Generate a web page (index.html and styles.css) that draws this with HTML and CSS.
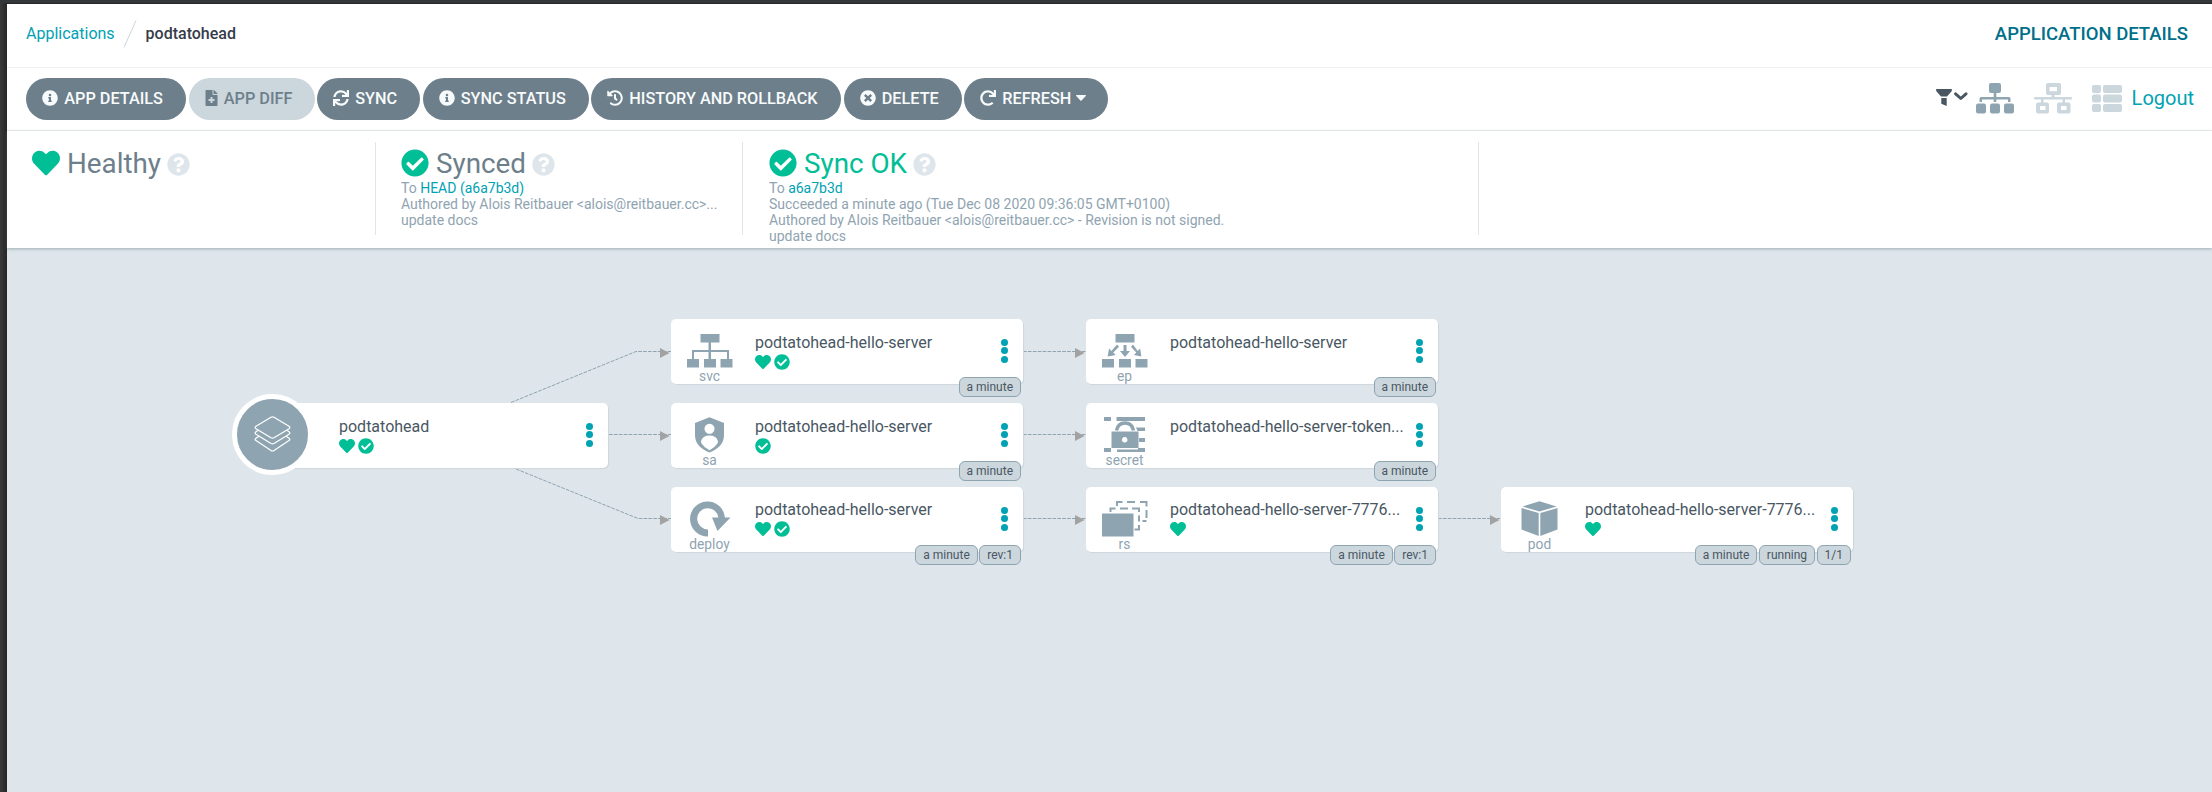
FILE: index.html
```html
<!DOCTYPE html>
<html lang="en">
<head>
<meta charset="utf-8">
<title>podtatohead</title>
<link rel="stylesheet" href="styles.css">
</head>
<body>
<svg class="defs" width="0" height="0">
  <symbol id="heart" viewBox="0 0 512 512"><path d="M462.3 62.6C407.5 15.9 326 24.3 275.7 76.2L256 96.5l-19.7-20.3C186.1 24.3 104.5 15.9 49.7 62.6c-62.8 53.6-66.1 149.8-9.9 207.9l193.5 199.8c12.5 12.9 32.8 12.9 45.3 0l193.5-199.8c56.3-58.1 53-154.3-9.8-207.9z"/></symbol>
  <symbol id="check" viewBox="0 0 512 512"><path d="M504 256c0 136.967-111.033 248-248 248S8 392.967 8 256 119.033 8 256 8s248 111.033 248 248zM227.314 387.314l184-184c6.248-6.248 6.248-16.379 0-22.627l-22.627-22.627c-6.248-6.249-16.379-6.249-22.628 0L216 308.118l-70.059-70.059c-6.248-6.248-16.379-6.248-22.628 0l-22.627 22.627c-6.248 6.248-6.248 16.379 0 22.627l104 104c6.249 6.249 16.379 6.249 22.628.001z"/></symbol>
  <symbol id="question" viewBox="0 0 512 512"><path d="M504 256c0 136.997-111.043 248-248 248S8 392.997 8 256C8 119.083 119.043 8 256 8s248 111.083 248 248zM262.655 90c-54.497 0-89.255 22.957-116.549 63.758-3.536 5.286-2.353 12.415 2.715 16.258l34.699 26.31c5.205 3.947 12.621 3.008 16.665-2.122 17.864-22.658 30.113-35.797 57.303-35.797 20.429 0 45.698 13.148 45.698 32.958 0 14.976-12.363 22.667-32.534 33.976C247.128 238.528 216 254.941 216 296v4c0 6.627 5.373 12 12 12h56c6.627 0 12-5.373 12-12v-1.333c0-28.462 83.186-29.647 83.186-106.667 0-58.002-60.165-102-116.531-102zM256 338c-25.365 0-46 20.635-46 46 0 25.364 20.635 46 46 46s46-20.636 46-46c0-25.365-20.635-46-46-46z"/></symbol>
  <symbol id="info" viewBox="0 0 512 512"><path d="M256 8C119.043 8 8 119.083 8 256c0 136.997 111.043 248 248 248s248-111.003 248-248C504 119.083 392.957 8 256 8zm0 110c23.196 0 42 18.804 42 42s-18.804 42-42 42-42-18.804-42-42 18.804-42 42-42zm56 254c0 6.627-5.373 12-12 12h-88c-6.627 0-12-5.373-12-12v-24c0-6.627 5.373-12 12-12h12v-64h-12c-6.627 0-12-5.373-12-12v-24c0-6.627 5.373-12 12-12h64c6.627 0 12 5.373 12 12v100h12c6.627 0 12 5.373 12 12v24z"/></symbol>
  <symbol id="times" viewBox="0 0 512 512"><path d="M256 8C119 8 8 119 8 256s111 248 248 248 248-111 248-248S393 8 256 8zm121.6 313.1c4.7 4.7 4.7 12.3 0 17L338 377.6c-4.7 4.7-12.3 4.7-17 0L256 312l-65.1 65.6c-4.7 4.7-12.3 4.7-17 0L134.4 338c-4.7-4.7-4.7-12.3 0-17l65.6-65-65.6-65.1c-4.7-4.7-4.7-12.3 0-17l39.6-39.6c4.7-4.7 12.3-4.7 17 0l65 65.7 65.1-65.6c4.7-4.7 12.3-4.7 17 0l39.6 39.6c4.7 4.7 4.7 12.3 0 17L312 256l65.6 65.1z"/></symbol>
  <symbol id="sync" viewBox="0 0 512 512"><path d="M440.65 12.57l4 82.77A247.16 247.16 0 0 0 255.83 8C134.73 8 33.91 94.92 12.29 209.82A12 12 0 0 0 24.09 224h49.05a12 12 0 0 0 11.67-9.26 175.91 175.91 0 0 1 317-56.94l-101.46-4.86a12 12 0 0 0-12.57 12v47.41a12 12 0 0 0 12 12H500a12 12 0 0 0 12-12V12a12 12 0 0 0-12-12h-47.37a12 12 0 0 0-11.98 12.57zM255.83 432a175.61 175.61 0 0 1-146-77.8l101.8 4.87a12 12 0 0 0 12.57-12v-47.4a12 12 0 0 0-12-12H12a12 12 0 0 0-12 12V500a12 12 0 0 0 12 12h47.35a12 12 0 0 0 12-12.6l-4.15-82.57A247.17 247.17 0 0 0 255.83 504c121.11 0 221.93-86.92 243.55-201.82a12 12 0 0 0-11.8-14.18h-49.05a12 12 0 0 0-11.67 9.26A175.86 175.86 0 0 1 255.83 432z"/></symbol>
  <symbol id="redo" viewBox="0 0 512 512"><path d="M500.33 0h-47.41a12 12 0 0 0-12 12.57l4 82.76A247.42 247.42 0 0 0 256 8C119.34 8 7.9 119.53 8 256.19 8.1 393.07 119.1 504 256 504a247.1 247.1 0 0 0 166.18-63.91 12 12 0 0 0 .48-17.43l-34-34a12 12 0 0 0-16.38-.55A176 176 0 1 1 402.1 157.8l-101.53-4.87a12 12 0 0 0-12.57 12v47.41a12 12 0 0 0 12 12h200.33a12 12 0 0 0 12-12V12a12 12 0 0 0-12-12z"/></symbol>
  <symbol id="history" viewBox="0 0 512 512"><path d="M504 255.531c.253 136.64-111.18 248.372-247.82 248.468-59.015.042-113.223-20.53-155.822-54.911-11.077-8.94-11.905-25.541-1.839-35.607l11.267-11.267c8.609-8.609 22.353-9.551 31.891-1.984C173.062 425.135 212.781 440 256 440c101.705 0 184-82.311 184-184 0-101.705-82.311-184-184-184-48.814 0-93.149 18.969-126.068 49.932l50.754 50.754c10.08 10.08 2.941 27.314-11.313 27.314H24c-8.837 0-16-7.163-16-16V38.627c0-14.254 17.234-21.393 27.314-11.314l49.372 49.372C129.209 34.136 189.552 8 256 8c136.81 0 247.747 110.78 248 247.531zm-180.912 78.784l9.823-12.63c8.138-10.463 6.253-25.542-4.21-33.679L288 256.349V152c0-13.255-10.745-24-24-24h-16c-13.255 0-24 10.745-24 24v135.651l65.409 50.874c10.463 8.137 25.541 6.253 33.679-4.21z"/></symbol>
  <symbol id="file" viewBox="0 0 384 512"><path d="M377 105L279.1 7c-4.5-4.5-10.6-7-17-7H256v128h128v-6.1c0-6.3-2.5-12.4-7-16.9zm-153 31V0H24C10.7 0 0 10.7 0 24v464c0 13.3 10.7 24 24 24h336c13.3 0 24-10.7 24-24V160H248c-13.2 0-24-10.8-24-24zm64 160v48c0 4.4-3.6 8-8 8h-56v56c0 4.4-3.6 8-8 8h-48c-4.4 0-8-3.6-8-8v-56h-56c-4.4 0-8-3.6-8-8v-48c0-4.4 3.6-8 8-8h56v-56c0-4.4 3.6-8 8-8h48c4.4 0 8 3.6 8 8v56h56c4.4 0 8 3.6 8 8z"/></symbol>
</svg>
<div class="page">
  <header class="topbar">
    <nav class="crumbs">
      <a class="link">Applications</a>
      <svg class="slash" width="14" height="28" viewBox="0 0 14 28"><path d="M13 .5L1 27.5"/></svg>
      <span class="current">podtatohead</span>
    </nav>
    <span class="page-title">APPLICATION DETAILS</span>
  </header>
  <div class="toolbar">
    <div class="buttons">
      <button class="btn b1"><svg class="ic"><use href="#info"/></svg>APP DETAILS</button>
      <button class="btn b2 off"><svg class="ic file"><use href="#file"/></svg>APP DIFF</button>
      <button class="btn b3"><svg class="ic"><use href="#sync"/></svg>SYNC</button>
      <button class="btn b4"><svg class="ic"><use href="#info"/></svg>SYNC STATUS</button>
      <button class="btn b5"><svg class="ic"><use href="#history"/></svg>HISTORY AND ROLLBACK</button>
      <button class="btn b6"><svg class="ic"><use href="#times"/></svg>DELETE</button>
      <button class="btn b7"><svg class="ic"><use href="#redo"/></svg>REFRESH<svg class="caret" width="10" height="6" viewBox="0 0 10 6"><path d="M.5 0h9q.8.2.2 1L5.6 5.5q-.6.5-1.2 0L.3 1Q-.3.2.5 0z"/></svg></button>
    </div>
    <div class="views">
      <svg class="filter" width="32" height="18" viewBox="0 0 32 18"><path d="M.4 0h15.200q.7 1.300-.2 2.500L11 7.600H5L.6 2.500Q-.3 1.300.4 0zM5.300 9h5.400v8l-5.400-2.200z"/><path class="chev" d="M19.600 4.800l5.200 4.700 5.200-4.700"/></svg>
      <svg class="tree" width="38" height="31" viewBox="0 0 38 31"><rect x="13" width="12" height="10" rx="2"/><path d="M17.700 9h2.600v5H33q1.500 0 1.500 1.500V19H32v-2.500H20.300V19h-2.600v-2.500H6V19H3.500v-3.500Q3.500 14 5 14h12.700z"/><rect y="20.500" width="10" height="10" rx="2"/><rect x="14" y="20.500" width="10" height="10" rx="2"/><rect x="28" y="20.500" width="10" height="10" rx="2"/></svg>
      <svg class="network" width="38" height="31" viewBox="0 0 38 31"><path fill-rule="evenodd" d="M14 0h11q2 0 2 2v8q0 2-2 2h-4.500v2H37q1 0 1 1.200t-1 1.300h-6v3h3.500q2 0 2 2v7q0 2-2 2H25q-2 0-2-2v-7q0-2 2-2h3.500v-3h-19v3H13q2 0 2 2v7q0 2-2 2H4q-2 0-2-2v-7q0-2 2-2h3v-3H1q-1 0-1-1.300T1 14h16.500v-2H14q-2 0-2-2V2q0-2 2-2zm1.500 4v4.200H23V4zM6 23v4h5.500v-4zm21 0v4h5.500v-4z"/></svg>
      <svg class="list" width="30" height="27" viewBox="0 0 30 27"><rect width="9" height="8" rx="2"/><rect x="11" width="19" height="8" rx="2"/><rect y="9.500" width="9" height="8" rx="2"/><rect x="11" y="9.500" width="19" height="8" rx="2"/><rect y="19" width="9" height="8" rx="2"/><rect x="11" y="19" width="19" height="8" rx="2"/></svg>
      <a class="logout">Logout</a>
    </div>
  </div>
  <section class="status">
    <div class="panel p1">
      <div class="state"><svg class="big"><use href="#heart"/></svg><span>Healthy</span><svg class="help"><use href="#question"/></svg></div>
    </div>
    <div class="panel p2">
      <div class="state"><svg class="big"><use href="#check"/></svg><span>Synced</span><svg class="help"><use href="#question"/></svg></div>
      <p>To <a>HEAD (a6a7b3d)</a></p>
      <p>Authored by Alois Reitbauer &lt;alois@reitbauer.cc&gt;...</p>
      <p>update docs</p>
    </div>
    <div class="panel p3">
      <div class="state ok"><svg class="big"><use href="#check"/></svg><span>Sync OK</span><svg class="help"><use href="#question"/></svg></div>
      <p>To <a>a6a7b3d</a></p>
      <p>Succeeded a minute ago (Tue Dec 08 2020 09:36:05 GMT+0100)</p>
      <p>Authored by Alois Reitbauer &lt;alois@reitbauer.cc&gt; - Revision is not signed.</p>
      <p>update docs</p>
    </div>
  </section>
  <main class="graph">
    <svg class="edges" width="2205" height="544" viewBox="7 248 2205 544">
      <g class="lines"><path d="M511 402.500L636 351.500H671M609 434.500H671M516 469L638 518.500H671M1023 351.500H1086M1023 434.500H1086M1023 518.500H1086M1438 518.500H1500"/></g>
      <g class="heads"><path d="M660 348l9.500 5-9.500 5zM660 431l9.500 5-9.500 5zM660 515l9.500 5-9.500 5zM1075 348l9.500 5-9.500 5zM1075 431l9.500 5-9.500 5zM1075 515l9.500 5-9.500 5zM1490 515l9.500 5-9.500 5z"/></g>
    </svg>
    <article class="node root" style="left:249px;top:155px">
      <div class="disc"><svg width="37" height="37" viewBox="0 0 37 37"><path d="M17 1.300q1.500-.8 3 0l15 9q1.700 1.200 0 2.400l-15 9q-1.500.8-3 0l-15-9q-1.700-1.200 0-2.400zM4.500 14l-2.500 1.800q-1.700 1.200 0 2.400l15 9.300q1.500.8 3 0l15-9.300q1.700-1.200 0-2.400L32.500 14M4.500 20.500l-2.500 1.700q-1.700 1.200 0 2.400l15 10q1.500.8 3 0l15-10q1.700-1.200 0-2.400l-2.500-1.700"/></svg></div>
      <div class="body"><h3>podtatohead</h3><div class="marks"><svg><use href="#heart"/></svg><svg><use href="#check"/></svg></div></div>
      <div class="dots"><i></i><i></i><i></i></div>
    </article>
    <article class="node" style="left:664px;top:71px">
      <div class="kind"><svg width="46" height="36" viewBox="0 0 46 36"><path d="M13.500 1h19v8.500H24V17h18v9h-2v-7H24v7h-2.500v-7H7v7H5v-9h16.500V9.500h-8zM0 26h12v8.500H0zM17 26h12v8.500H17zM33.500 26h12v8.500h-12z"/></svg><span>svc</span></div>
      <div class="body"><h3>podtatohead-hello-server</h3><div class="marks"><svg><use href="#heart"/></svg><svg><use href="#check"/></svg></div></div>
      <div class="dots"><i></i><i></i><i></i></div>
      <div class="tags"><span>a minute</span></div>
    </article>
    <article class="node" style="left:664px;top:155px">
      <div class="kind"><svg width="46" height="36" viewBox="0 0 46 36"><path fill-rule="evenodd" d="M22.500.2L37 6v12q0 12-14.500 17.500Q8 30 8 18V6zm0 6.600a5 5 0 1 0 .01 0zM14.200 26q3 4.800 8.300 7.300 5.300-2.500 8.300-7.300v-2.500q-2-5-8.300-5t-8.300 5z"/></svg><span>sa</span></div>
      <div class="body"><h3>podtatohead-hello-server</h3><div class="marks"><svg><use href="#check"/></svg></div></div>
      <div class="dots"><i></i><i></i><i></i></div>
      <div class="tags"><span>a minute</span></div>
    </article>
    <article class="node low" style="left:664px;top:239px">
      <div class="kind"><svg width="46" height="36" viewBox="0 0 46 36"><path d="M21 35.500A17.500 17.500 0 1 1 38 16.500h5.500L30.500 30 25 16.500h6.300A10.600 10.600 0 1 0 21 28.400z"/></svg><span>deploy</span></div>
      <div class="body"><h3>podtatohead-hello-server</h3><div class="marks"><svg><use href="#heart"/></svg><svg><use href="#check"/></svg></div></div>
      <div class="dots"><i></i><i></i><i></i></div>
      <div class="tags"><span>a minute</span><span>rev:1</span></div>
    </article>
    <article class="node" style="left:1079px;top:71px">
      <div class="kind"><svg width="46" height="36" viewBox="0 0 46 36"><path d="M13.500 1h19v8.500h-19zM0 26h12v8.500H0zM17 26h12v8.500H17zM33.500 26h12v8.500h-12zM21.500 12h3v6H28l-5 6-5-6h3.500zM15 11.500l2 2.200-5.700 5.700 2.400 2.600-8 1.500 1.300-8 2.400 2.400zM31 11.500l-2 2.200 5.300 5.700-2.400 2.600 7.500 1.500-1.300-8-2.400 2.400z"/></svg><span>ep</span></div>
      <div class="body"><h3>podtatohead-hello-server</h3></div>
      <div class="dots"><i></i><i></i><i></i></div>
      <div class="tags"><span>a minute</span></div>
    </article>
    <article class="node" style="left:1079px;top:155px">
      <div class="kind"><svg width="46" height="36" viewBox="0 0 46 36"><path d="M2 0h7v4H2zM14.500 0H43v4H14.500zM34 10.500h9v3.500h-7.500zM37 21h6v4h-6zM2 31h7v4H2zM15 32.500h21V31h7v4H15z"/><path fill-rule="evenodd" d="M9.500 14.500h27v16.500h-27zM22.700 20a2.800 2.800 0 1 0 .01 0z"/><path class="arch" d="M14.500 13.500q1.500-7.500 8.500-7.500t8.500 7.500"/></svg><span>secret</span></div>
      <div class="body"><h3>podtatohead-hello-server-token...</h3></div>
      <div class="dots"><i></i><i></i><i></i></div>
      <div class="tags"><span>a minute</span></div>
    </article>
    <article class="node low" style="left:1079px;top:239px">
      <div class="kind"><svg width="46" height="36" viewBox="0 0 46 36"><path d="M0 12.500h31.500V35.500H0z"/><path class="dash" d="M8.500 11V7.500h5M18 7.500h8M30 7.500h7V11M37 14.500v6M37 24v4.500h-4.500M15 5V1h5.500M25 1h8M38 1h6.500v4.500M44.500 9v8M44.500 20h-4"/></svg><span>rs</span></div>
      <div class="body"><h3>podtatohead-hello-server-7776...</h3><div class="marks"><svg><use href="#heart"/></svg></div></div>
      <div class="dots"><i></i><i></i><i></i></div>
      <div class="tags"><span>a minute</span><span>rev:1</span></div>
    </article>
    <article class="node low" style="left:1494px;top:239px">
      <div class="kind"><svg width="46" height="36" viewBox="0 0 46 36"><path d="M22.500.2L39.500 5.500 22.500 10.500 5.500 5.500zM4.500 7L21.700 12v23L4.500 28.500zM40.500 7L23.300 12v23l17.200-6.500z"/></svg><span>pod</span></div>
      <div class="body"><h3>podtatohead-hello-server-7776...</h3><div class="marks"><svg><use href="#heart"/></svg></div></div>
      <div class="dots"><i></i><i></i><i></i></div>
      <div class="tags"><span>a minute</span><span>running</span><span>1/1</span></div>
    </article>
  </main>
</div>
</body>
</html>
```
FILE: styles.css
```css
* { box-sizing: border-box; }
body {
  margin: 0;
  width: 2212px;
  height: 792px;
  overflow: hidden;
  background: #323337;
  font-family: Roboto, "Liberation Sans", sans-serif;
}
.defs { position: absolute; }
svg { fill: currentColor; flex: none; display: block; }
h3, p { margin: 0; font-weight: 400; white-space: nowrap; }
.page {
  display: flex;
  flex-direction: column;
  height: 792px;
  padding: 4px 0 0 7px;
  background: linear-gradient(#35363a 3px, transparent 3px), linear-gradient(90deg, #3a3a3a, #262626 7px);
}
.topbar, .toolbar {
  display: flex;
  align-items: center;
  justify-content: space-between;
  background: #fff;
  border-bottom: 1px solid #eef0f2;
  padding-left: 19px;
}
.topbar { height: 64px; padding-right: 24px; }
.crumbs { display: flex; align-items: center; font-size: 16px; padding-bottom: 4px; }
.link { color: #00a2b3; }
.slash { margin: 0 9px 0 8px; fill: none; stroke: #ccd6dd; }
.current { font-weight: 500; color: #363c4a; }
.page-title { font-size: 18.500px; font-weight: 500; color: #006f8a; padding-bottom: 4px; }
.toolbar { height: 63px; padding-right: 18px; }
.buttons { display: flex; }
.btn {
  display: flex;
  align-items: center;
  height: 42px;
  border: 0;
  border-radius: 21px;
  padding: 0 0 2px 16px;
  margin-right: 2.500px;
  background: #6d7f8b;
  color: #f8fbfb;
  font: 500 16.250px Roboto, sans-serif;
  white-space: nowrap;
}
.off { background: #ccd6dd; color: #6d7f8b; }
.b1 { width: 160px; } .b2 { width: 126px; } .b3 { width: 103px; } .b4 { width: 166px; }
.b5 { width: 250px; } .b6 { width: 118px; } .b7 { width: 144px; }
.ic { width: 16px; height: 16px; margin-right: 6.250px; }
.ic.file { width: 13px; }
.caret { margin-left: 5px; }
.views { display: flex; align-items: center; color: #ccd6dd; padding-bottom: 2px; }
.filter { color: #495763; margin-right: 8px; }
.chev { fill: none; stroke: #495763; stroke-width: 3; stroke-linecap: round; stroke-linejoin: round; }
.tree { color: #8fa4b1; margin-right: 20px; }
.network { margin-right: 20px; }
.list { margin-right: 10px; }
.logout { font-size: 20px; color: #00a2b3; }
.status {
  position: relative;
  z-index: 1;
  display: flex;
  height: 117px;
  padding-top: 11px;
  background: #fff;
  box-shadow: 0 1px 3px rgba(95, 115, 125, .5);
}
.panel { height: 93px; border-right: 1px solid #dee6eb; color: #8fa4b1; font-size: 14px; line-height: 16px; padding-top: 6px; }
.p1 { width: 369px; padding-left: 25px; }
.p2 { width: 367px; padding-left: 25px; }
.p3 { width: 736px; padding-left: 26px; }
.state { display: flex; align-items: center; height: 31px; font-size: 27.800px; color: #6d7f8b; margin-bottom: 1px; }
.state.ok { color: #00be96; }
.big { width: 28px; height: 28px; color: #00be96; margin: 0 7px 2px 0; }
.help { width: 23px; height: 23px; color: #dee6eb; margin: 2px 0 0 6px; }
.panel a { color: #00a2b3; }
.graph { position: relative; flex: 1; background: #dee6eb; }
.edges { position: absolute; left: 0; top: 0; }
.lines { fill: none; stroke: #8fa4b1; stroke-dasharray: 3.700 1.200; }
.heads { fill: #a2a2a2; }
.node {
  position: absolute;
  display: flex;
  width: 352px;
  height: 65px;
  border-radius: 5px;
  background: #fff;
  box-shadow: 1px 1px 1px #ccd6dd;
}
.kind { width: 77px; padding-top: 14px; display: flex; flex-direction: column; align-items: center; color: #8fa4b1; font-size: 13.750px; line-height: 16px; }
.kind span { margin-top: -1px; }
.kind svg { overflow: visible; }
.body { flex: 1; padding: 14px 0 0 7px; color: #495763; }
.low .body { padding-top: 13px; }
h3 { font-size: 16px; line-height: 20px; }
.marks { display: flex; gap: 2.500px; color: #00be96; margin-top: 1px; }
.marks svg { width: 16px; height: 16px; }
.dots { display: flex; flex-direction: column; gap: 1.500px; padding: 19.500px 15px 0 0; }
.dots i { width: 7px; height: 7px; border-radius: 50%; background: #00a2b3; }
.root .body { padding-left: 83px; }
.disc {
  position: absolute;
  left: -24px;
  top: -9px;
  width: 81px;
  height: 81px;
  border: 5px solid #fff;
  border-radius: 50%;
  background: #8fa4b1;
  display: flex;
  align-items: center;
  justify-content: center;
}
.disc svg { fill: none; stroke: #fff; stroke-width: 1.200; }
.tags { position: absolute; right: 2px; top: 58px; display: flex; gap: 1.500px; }
.tags span {
  height: 20px;
  border: 1px solid #8fa4b1;
  border-radius: 6px;
  background: #ccd6dd;
  color: #495763;
  font-size: 12px;
  line-height: 18px;
  padding: 0 7px;
}
.arch { fill: none; stroke: #8fa4b1; stroke-width: 3.500; }
.dash { fill: none; stroke: #8fa4b1; stroke-width: 2; }
```
